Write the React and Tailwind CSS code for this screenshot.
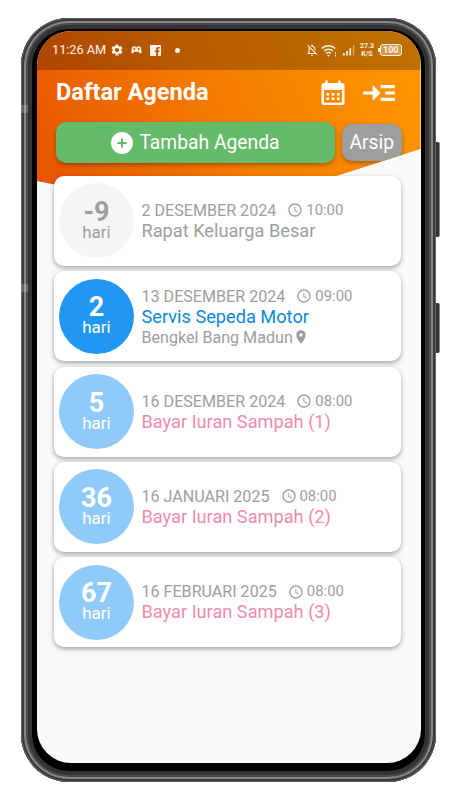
import { FaCirclePlus } from 'react-icons/fa6';
import { MdSettings, MdAccessTime, MdLocationOn, MdReadMore, MdOutlineNotificationsOff } from 'react-icons/md';

const AGENDA = [
  { id: 1, days: '-9', date: '2 DESEMBER 2024', time: '10:00', title: 'Rapat Keluarga Besar', status: 'past' },
  { id: 2, days: '2', date: '13 DESEMBER 2024', time: '09:00', title: 'Servis Sepeda Motor', place: 'Bengkel Bang Madun', status: 'soon' },
  { id: 3, days: '5', date: '16 DESEMBER 2024', time: '08:00', title: 'Bayar Iuran Sampah (1)', status: 'later' },
  { id: 4, days: '36', date: '16 JANUARI 2025', time: '08:00', title: 'Bayar Iuran Sampah (2)', status: 'later' },
  { id: 5, days: '67', date: '16 FEBRUARI 2025', time: '08:00', title: 'Bayar Iuran Sampah (3)', status: 'later' },
];

const CIRCLE_COLORS = {
  past: 'bg-[#f5f5f5] text-[#9e9e9e]',
  soon: 'bg-[#2196f3] text-white',
  later: 'bg-[#90caf9] text-white',
};

const TITLE_COLORS = {
  past: 'text-[#9e9e9e]',
  soon: 'text-[#0b88dc]',
  later: 'text-[#f08bae]',
};

function CalendarIcon() {
  return (
    <svg width="24" height="26" viewBox="0 0 24 26" fill="none">
      <path d="M5.5 1.5v4M18.5 1.5v4" stroke="white" strokeWidth="2.4" strokeLinecap="round" />
      <path
        fillRule="evenodd"
        fill="white"
        d="M3 3h18a2.5 2.5 0 0 1 2.5 2.5v17A2.5 2.5 0 0 1 21 25H3a2.5 2.5 0 0 1-2.5-2.5v-17A2.5 2.5 0 0 1 3 3ZM3 10v11.5a1.2 1.2 0 0 0 1.2 1.2h15.6A1.2 1.2 0 0 0 21 21.5V10Z"
      />
      <path fill="white" d="M5.5 13h2.6v2.6H5.5zM10.700 13h2.6v2.6h-2.6zM15.9 13h2.6v2.6h-2.6zM5.5 17.5h2.6v2.6H5.5zM10.7 17.5h2.6v2.6h-2.6zM15.9 17.5h2.6v2.6h-2.6z" />
    </svg>
  );
}

function StatusBar() {
  return (
    <div className="flex h-[38.5px] items-center bg-black/25 pl-[15.5px] pr-[18.5px] text-[#fff3e6]">
      <span className="w-[53px] text-[12.7px] leading-none whitespace-nowrap">11:26 AM</span>
      <MdSettings size={14} className="ml-[5px]" />
      <svg className="ml-[7px]" width="11" height="8" viewBox="0 0 11 8" fill="currentColor">
        <path fillRule="evenodd" d="M2 .5h2.5l.4.8h1.2l.4-.8H9c1.2 0 2 5.5 1.4 6.6-.7.8-2-.3-2.8-1.4H3.4C2.6 6.8 1.3 7.900.6 7.1 0 6 .8.5 2 .5ZM3.4 1.8 2.2 3l1.2 1.2L4.6 3ZM7.6 1.8 6.4 3l1.2 1.2L8.8 3Z" />
      </svg>
      <svg className="ml-[8px]" width="11" height="11" viewBox="0 0 11 11" fill="currentColor">
        <path d="M1 0h9a1 1 0 0 1 1 1v9a1 1 0 0 1-1 1H8V7h1.4l.3-1.6H8V4.3c0-.5.3-.8.9-.8h.9V2H8.3C7 2 6.2 2.8 6.2 4.1v1.3H4.8V7h1.4v4H1a1 1 0 0 1-1-1V1a1 1 0 0 1 1-1Z" />
      </svg>
      <span className="ml-[14px] size-[4.5px] rounded-full bg-current" />
      <div className="ml-auto flex items-center">
        <MdOutlineNotificationsOff size={14} />
        <svg className="ml-[2px]" width="16" height="13" viewBox="0 0 16 13" fill="none" stroke="currentColor" strokeWidth="1.5">
          <path d="M.8 4.6a9.3 9.3 0 0 1 13.4 0M3 7.1a6.2 6.2 0 0 1 9 0M5.2 9.5a3.2 3.2 0 0 1 4.6 0" />
          <path d="M7.5 12.8 6 11h3Z" fill="currentColor" stroke="none" />
          <path d="M14.5 8v1.5M14.5 10.5V12.5" strokeWidth="1" />
        </svg>
        <svg className="ml-[6px]" width="12" height="12" viewBox="0 0 12 12" fill="currentColor">
          <path d="M0 9h1.7v2.5H0zM3.2 7h1.7v4.5H3.2zM6.4 4.2h1.7v7.3H6.4z" />
          <path opacity=".45" d="M9.8 1h1.5v10.5H9.8z" />
        </svg>
        <div className="ml-[5px] flex flex-col items-center text-[7px] leading-[8px] font-bold">
          <span>27.3</span>
          <span>K/S</span>
        </div>
        <div className="ml-[4px] flex items-center">
          <span className="h-[4px] w-[1.5px] bg-current" />
          <span className="flex h-[12px] w-[22.5px] items-center justify-center rounded-[3px] border border-current bg-white/30 text-[9px] leading-none font-bold">100</span>
        </div>
      </div>
    </div>
  );
}

function AgendaCard({ item }) {
  return (
    <div className="flex h-[90px] items-center rounded-[10px] bg-white pl-[5px] shadow-[0_2px_5px_rgba(0,0,0,0.35)]">
      <div className={`flex size-[75px] shrink-0 flex-col items-center justify-center rounded-full pt-px ${CIRCLE_COLORS[item.status]}`}>
        <span className="text-[27px] leading-[22px] font-bold">{item.days}</span>
        <span className="text-[17px] leading-[19px]">hari</span>
      </div>
      <div className="ml-[7.5px] flex flex-col pt-px text-[#9e9e9e]">
        <div className="flex items-center text-[16.1px] leading-[19px]">
          <span>{item.date}</span>
          <MdAccessTime size={16} className="ml-[11px] mr-[3px]" />
          <span className="text-[14.9px]">{item.time}</span>
        </div>
        <span className={`text-[18.2px] leading-[22px] ${TITLE_COLORS[item.status]}`}>{item.title}</span>
        {item.place && (
          <span className="flex items-center text-[16.1px] leading-[19px]">
            {item.place}
            <MdLocationOn size={16} />
          </span>
        )}
      </div>
    </div>
  );
}

export default function App() {
  return (
    <div className="flex h-[800px] w-[451px] bg-white pt-[18px] pl-[21px] font-['Roboto',sans-serif]">
      {/* Phone body */}
      <div className="relative h-[764px] w-[415px] shrink-0 rounded-[48px] bg-black pt-[13px] pl-[15.5px] shadow-[inset_0_0_0_1px_#606060,inset_0_0_0_3px_#3c3c3c,inset_0_0_0_5px_#858585,inset_0_0_0_7px_#4a4a4a,inset_0_0_0_11px_#333333]">
        <div className="h-[732px] w-[384px] overflow-hidden rounded-[34px] bg-[#fafafa]">
          {/* Orange banner, its slanted bottom edge runs behind the first card */}
          <div className="h-[185px] bg-[linear-gradient(65deg,#e65100_0%,#f57c00_50%,#ff9800_100%)] [clip-path:polygon(0_0,100%_0,100%_118px,175px_185px,0_150px)]">
            <StatusBar />
            <div className="flex h-[46.5px] items-center justify-between pr-[22.5px] pl-[19.5px] text-white">
              <h1 className="text-[23.6px] leading-none font-bold">Daftar Agenda</h1>
              <div className="flex items-center gap-[15px]">
                <CalendarIcon />
                <MdReadMore size={38} />
              </div>
            </div>
            <div className="flex items-center gap-[7px] pt-[6px] pl-[19.5px] text-white">
              <button className="flex h-[41px] w-[279px] items-center justify-center gap-[6px] rounded-[10px] bg-[#66bb6a] pt-px text-[19.3px] shadow-[0_2px_4px_rgba(0,0,0,0.32)]">
                <FaCirclePlus size={22} />
                Tambah Agenda
              </button>
              <button className="h-[37px] w-[59.5px] rounded-[10px] bg-[#9e9e9e] pt-px text-[19.3px] shadow-[0_2px_4px_rgba(0,0,0,0.32)]">Arsip</button>
            </div>
          </div>
          <div className="relative -mt-[40.2px] flex flex-col gap-[5.4px] pr-[19.5px] pl-[17.5px]">
            {AGENDA.map(item => (
              <AgendaCard key={item.id} item={item} />
            ))}
          </div>
        </div>
        {/* Antenna bands */}
        <span className="absolute top-[87px] left-0 h-[8px] w-[7px] bg-white/20" />
        <span className="absolute top-[266px] left-0 h-[8px] w-[7px] bg-white/20" />
      </div>
      {/* Volume and power keys */}
      <div className="flex flex-col pt-[124px]">
        <span className="h-[95px] w-[4px] rounded-r-[2px] border-r border-[#888] bg-[#333]" />
        <span className="mt-[66px] h-[50px] w-[4px] rounded-r-[2px] border-r border-[#888] bg-[#333]" />
      </div>
    </div>
  );
}
